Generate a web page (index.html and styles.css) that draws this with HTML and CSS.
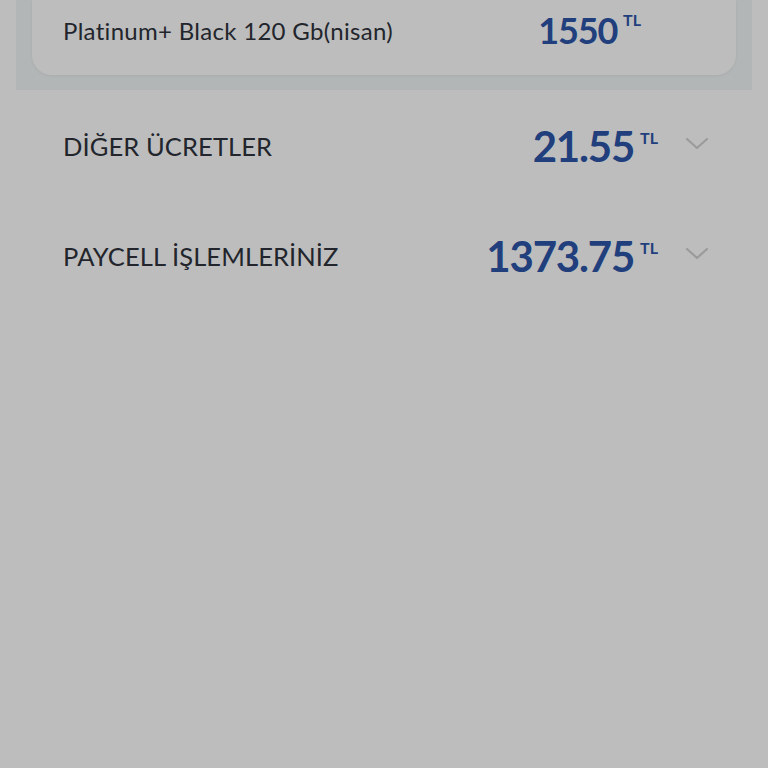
FILE: index.html
```html
<!DOCTYPE html>
<html lang="tr">
<head>
    <meta charset="UTF-8">
    <meta name="viewport" content="width=device-width, initial-scale=1.0">
    <title>Fatura Detayı</title>
    <link rel="stylesheet" href="styles.css">
</head>
<body>
    <div class="panel">
        <div class="card">
            <span class="item-name">Platinum+ Black 120 Gb(nisan)</span>
            <span class="item-price">1550<sup>TL</sup></span>
        </div>
    </div>

    <div class="rows">
        <div class="row">
            <span class="row-title">DİĞER ÜCRETLER</span>
            <span class="row-amount">21.55<sup>TL</sup></span>
            <svg class="chevron" width="24" height="14" viewBox="0 0 24 14">
                <path d="M2 2 L12 11 L22 2" fill="none" stroke="#9b9b9b" stroke-width="2.2" stroke-linecap="round" stroke-linejoin="round"/>
            </svg>
        </div>
        <div class="row">
            <span class="row-title">PAYCELL İŞLEMLERİNİZ</span>
            <span class="row-amount">1373.75<sup>TL</sup></span>
            <svg class="chevron" width="24" height="14" viewBox="0 0 24 14">
                <path d="M2 2 L12 11 L22 2" fill="none" stroke="#9b9b9b" stroke-width="2.2" stroke-linecap="round" stroke-linejoin="round"/>
            </svg>
        </div>
    </div>
</body>
</html>
```

FILE: styles.css
```css
* {
    margin: 0;
    padding: 0;
    box-sizing: border-box;
    font-family: 'Lato', 'Noto Sans', Arial, sans-serif;
}

body {
    background-color: #bdbdbd;
    min-height: 100vh;
}

.panel {
    margin: 0 16px;
    padding: 0 16px 15px;
    background-color: #b3b6b7;
}

.card {
    height: 75px;
    display: flex;
    align-items: center;
    padding: 0 95px 15px 31px;
    background-color: #bdbdbd;
    border-radius: 0 0 20px 20px;
    box-shadow: 0 1px 3px rgba(0, 0, 0, 0.06);
}

.item-name {
    flex: 1;
    font-size: 24px;
    color: #22252c;
    letter-spacing: 0.3px;
}

.item-price {
    font-size: 36px;
    font-weight: 700;
    color: #213f7c;
    letter-spacing: -1.2px;
    line-height: 1;
}

sup {
    font-size: 16px;
    font-weight: 700;
    letter-spacing: 0;
    margin-left: 6px;
    vertical-align: 18px;
}

.rows {
    padding-top: 1px;
}

.row {
    height: 110px;
    display: flex;
    align-items: center;
    padding: 0 59px 0 63px;
}

.row-title {
    flex: 1;
    font-size: 25.5px;
    color: #22252c;
    letter-spacing: 0.1px;
}

.row-amount {
    font-size: 42px;
    font-weight: 700;
    color: #213f7c;
    letter-spacing: -1.2px;
    line-height: 1;
}

.chevron {
    margin-left: 27px;
    margin-top: -4px;
}
```
